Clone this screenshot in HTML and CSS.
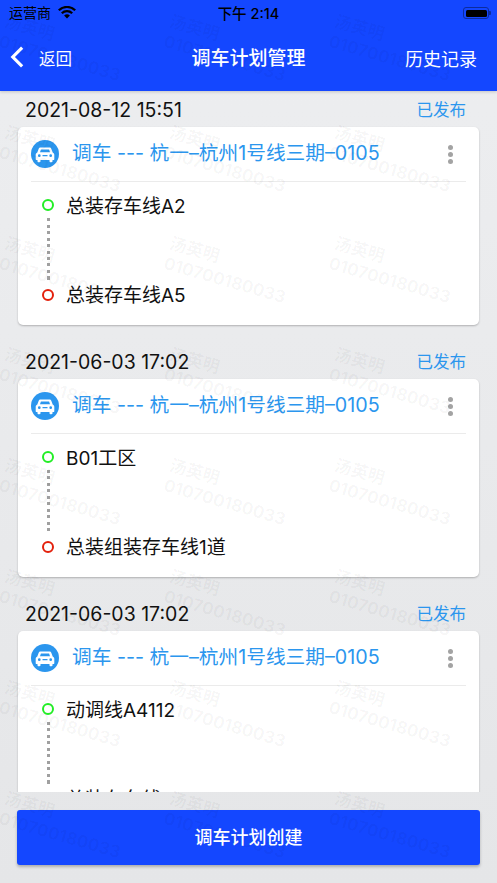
FILE: index.html
```html
<!DOCTYPE html>
<html lang="zh-CN">
<head>
<meta charset="utf-8">
<title>调车计划管理</title>
<link rel="stylesheet" href="styles.css">
</head>
<body>
<div class="app">
  <header class="header">
    <div class="status">
      <div class="status-left">
        <span class="carrier">运营商</span>
        <svg class="wifi" viewBox="0 0 18 13"><path d="M9 12.6 6.1 9.6a4.2 4.2 0 0 1 5.800 0Z"/><path d="M4.600 8.100 3 6.500a8.600 8.600 0 0 1 12 0l-1.600 1.600a6.300 6.300 0 0 0-8.800 0Z"/><path d="M1.600 5.100 0 3.500a12.900 12.900 0 0 1 18 0l-1.600 1.600a10.600 10.600 0 0 0-14.800 0Z"/></svg>
      </div>
      <div class="status-time">下午 2:14</div>
      <div class="battery"><span class="battery-fill"></span></div>
    </div>
    <nav class="nav">
      <div class="back">
        <svg class="chevron" viewBox="0 0 15 24"><path d="M13 2 3 12l10 10" fill="none" stroke="#fff" stroke-width="3.4"/></svg>
        <span>返回</span>
      </div>
      <h1 class="title">调车计划管理</h1>
      <div class="history">历史记录</div>
    </nav>
  </header>

  <main class="list">
    <section class="entry">
      <div class="entry-meta"><time>2021-08-12 15:51</time><span class="state">已发布</span></div>
      <article class="card">
        <div class="card-head">
          <svg class="car" viewBox="0 0 28 28"><circle cx="14" cy="14" r="14" fill="#2b96ee"/><path d="M9.600 7.500h8.800c.9 0 1.600.5 1.900 1.300l1.400 3.700c1 .4 1.600 1.300 1.600 2.400v4.300c0 .5-.4.9-.9.9h-.9v1.200c0 .5-.4.9-.9.9h-1.200c-.5 0-.9-.4-.9-.9v-1.200H9.500v1.200c0 .5-.4.9-.9.9H7.400c-.5 0-.9-.4-.9-.9v-1.200h-.9c-.5 0-.9-.4-.9-.9v-4.300c0-1.100.6-2 1.600-2.400l1.400-3.700c.3-.8 1-1.300 1.900-1.300Zm.3 2-.9 2.800h10l-.9-2.800ZM8.300 14.300a1.300 1.300 0 1 0 0 2.700 1.300 1.300 0 0 0 0-2.700Zm11.400 0a1.300 1.300 0 1 0 0 2.700 1.300 1.300 0 0 0 0-2.700ZM11.500 15v1.300h5V15Z" fill="#fff" fill-rule="evenodd"/></svg>
          <div class="card-title">调车 --- 杭一–杭州1号线三期–0105</div>
          <div class="more"><i></i><i></i><i></i></div>
        </div>
        <div class="route">
          <div class="stop"><span class="dot dot-start"></span><span class="stop-name">总装存车线A2</span></div>
          <div class="link"></div>
          <div class="stop"><span class="dot dot-end"></span><span class="stop-name">总装存车线A5</span></div>
        </div>
      </article>
    </section>

    <section class="entry">
      <div class="entry-meta"><time>2021-06-03 17:02</time><span class="state">已发布</span></div>
      <article class="card">
        <div class="card-head">
          <svg class="car" viewBox="0 0 28 28"><circle cx="14" cy="14" r="14" fill="#2b96ee"/><path d="M9.600 7.500h8.800c.9 0 1.600.5 1.900 1.300l1.400 3.700c1 .4 1.600 1.300 1.600 2.400v4.300c0 .5-.4.9-.9.9h-.9v1.200c0 .5-.4.9-.9.9h-1.200c-.5 0-.9-.4-.9-.9v-1.200H9.500v1.200c0 .5-.4.9-.9.9H7.400c-.5 0-.9-.4-.9-.9v-1.200h-.9c-.5 0-.9-.4-.9-.9v-4.300c0-1.100.6-2 1.600-2.400l1.400-3.700c.3-.8 1-1.300 1.900-1.300Zm.3 2-.9 2.800h10l-.9-2.800ZM8.300 14.300a1.300 1.300 0 1 0 0 2.700 1.300 1.300 0 0 0 0-2.700Zm11.400 0a1.300 1.300 0 1 0 0 2.700 1.300 1.300 0 0 0 0-2.700ZM11.500 15v1.300h5V15Z" fill="#fff" fill-rule="evenodd"/></svg>
          <div class="card-title">调车 --- 杭一–杭州1号线三期–0105</div>
          <div class="more"><i></i><i></i><i></i></div>
        </div>
        <div class="route">
          <div class="stop"><span class="dot dot-start"></span><span class="stop-name">B01工区</span></div>
          <div class="link"></div>
          <div class="stop"><span class="dot dot-end"></span><span class="stop-name">总装组装存车线1道</span></div>
        </div>
      </article>
    </section>

    <section class="entry">
      <div class="entry-meta"><time>2021-06-03 17:02</time><span class="state">已发布</span></div>
      <article class="card">
        <div class="card-head">
          <svg class="car" viewBox="0 0 28 28"><circle cx="14" cy="14" r="14" fill="#2b96ee"/><path d="M9.600 7.500h8.800c.9 0 1.600.5 1.900 1.300l1.400 3.700c1 .4 1.600 1.300 1.600 2.400v4.300c0 .5-.4.9-.9.9h-.9v1.200c0 .5-.4.9-.9.9h-1.200c-.5 0-.9-.4-.9-.9v-1.200H9.500v1.200c0 .5-.4.9-.9.9H7.400c-.5 0-.9-.4-.9-.9v-1.200h-.9c-.5 0-.9-.4-.9-.9v-4.300c0-1.100.6-2 1.600-2.400l1.400-3.700c.3-.8 1-1.300 1.900-1.300Zm.3 2-.9 2.800h10l-.9-2.800ZM8.300 14.300a1.300 1.300 0 1 0 0 2.700 1.300 1.300 0 0 0 0-2.700Zm11.400 0a1.300 1.300 0 1 0 0 2.700 1.300 1.300 0 0 0 0-2.700ZM11.500 15v1.300h5V15Z" fill="#fff" fill-rule="evenodd"/></svg>
          <div class="card-title">调车 --- 杭一–杭州1号线三期–0105</div>
          <div class="more"><i></i><i></i><i></i></div>
        </div>
        <div class="route">
          <div class="stop"><span class="dot dot-start"></span><span class="stop-name">动调线A4112</span></div>
          <div class="link"></div>
          <div class="stop"><span class="dot dot-end"></span><span class="stop-name">总装存车线A2</span></div>
        </div>
      </article>
    </section>
  </main>

  <footer class="footer">
    <button class="create" type="button">调车计划创建</button>
  </footer>

  <div class="watermarks" aria-hidden="true">
    <div class="mark">汤英明<br>010700180033</div><div class="mark">汤英明<br>010700180033</div><div class="mark">汤英明<br>010700180033</div>
    <div class="mark">汤英明<br>010700180033</div><div class="mark">汤英明<br>010700180033</div><div class="mark">汤英明<br>010700180033</div>
    <div class="mark">汤英明<br>010700180033</div><div class="mark">汤英明<br>010700180033</div><div class="mark">汤英明<br>010700180033</div>
    <div class="mark">汤英明<br>010700180033</div><div class="mark">汤英明<br>010700180033</div><div class="mark">汤英明<br>010700180033</div>
    <div class="mark">汤英明<br>010700180033</div><div class="mark">汤英明<br>010700180033</div><div class="mark">汤英明<br>010700180033</div>
    <div class="mark">汤英明<br>010700180033</div><div class="mark">汤英明<br>010700180033</div><div class="mark">汤英明<br>010700180033</div>
    <div class="mark">汤英明<br>010700180033</div><div class="mark">汤英明<br>010700180033</div><div class="mark">汤英明<br>010700180033</div>
    <div class="mark">汤英明<br>010700180033</div><div class="mark">汤英明<br>010700180033</div><div class="mark">汤英明<br>010700180033</div>
  </div>
</div>
</body>
</html>
```
FILE: styles.css
```css
* { box-sizing: border-box; }
html, body { margin: 0; padding: 0; height: 100%; }
body {
  font-family: Inter, "Noto Sans CJK SC", "Noto Sans", sans-serif;
  color: #111;
  background: #e8e9eb;
  overflow: hidden;
}
.app {
  position: relative;
  width: 497px;
  height: 883px;
  display: flex;
  flex-direction: column;
  overflow: hidden;
  background: linear-gradient(#edeef0, #e5e6e8);
}

/* Header */
.header {
  flex: none;
  height: 91px;
  background: #1447ff;
  box-shadow: 0 1px 3px rgba(0, 0, 0, .18);
  position: relative;
  z-index: 1;
}
.status {
  height: 26px;
  padding: 0 9px;
  display: grid;
  grid-template-columns: 1fr auto 1fr;
  align-items: center;
  color: #000;
  font-size: 14px;
}
.status-left { display: flex; align-items: center; gap: 7px; }
.carrier, .status-time { padding-bottom: 2px; }
.wifi { width: 18px; height: 13px; margin-top: -2px; }
.status-time { font-weight: 500; font-size: 14.500px; }
.battery {
  position: relative;
  justify-self: end;
  width: 26px;
  height: 12px;
  margin-right: -1px;
  border: 1px solid #0c2c9e;
  border-radius: 3px;
  padding: 1.500px;
}
.battery::after {
  content: "";
  position: absolute;
  right: -3px;
  top: 3px;
  width: 2px;
  height: 4px;
  background: #0c2c9e;
  border-radius: 0 1px 1px 0;
}
.battery-fill { display: block; height: 100%; background: #000; border-radius: 1.500px; }
.nav {
  height: 65px;
  padding: 0 20px;
  display: grid;
  grid-template-columns: 1fr auto 1fr;
  align-items: center;
  color: #fff;
}
.back { display: flex; align-items: center; gap: 15px; margin-left: -10px; font-size: 16.500px; }
.back span { padding-bottom: 2px; }
.chevron { width: 14px; height: 24px; margin-top: -3px; }
.title { margin: 0; padding-bottom: 4px; font-size: 19px; font-weight: 500; }
.history { justify-self: end; padding-bottom: 2px; font-size: 18px; }

/* List */
.list {
  flex: 1;
  min-height: 0;
  overflow: hidden;
  padding-top: 2px;
}
.entry { margin: 0 18px 20px; }
.entry-meta {
  height: 34px;
  padding: 0 13px 0 7px;
  display: flex;
  justify-content: space-between;
  align-items: center;
  font-size: 19.500px;
}
.state { padding-bottom: 2px; color: #2b96ee; font-size: 16.500px; }
.card {
  height: 198px;
  background: #fff;
  border-radius: 5px;
  box-shadow: 0 1px 2px rgba(0, 0, 0, .25);
  padding: 0 13px;
}
.card-head {
  height: 55px;
  border-bottom: 1px solid #ebebeb;
  display: flex;
  align-items: center;
}
.car { flex: none; width: 28px; height: 28px; }
.card-title {
  flex: 1;
  margin-left: 13px;
  padding-bottom: 5px;
  color: #2b96ee;
  font-size: 19.700px;
  white-space: nowrap;
}
.more { display: flex; flex-direction: column; gap: 2px; margin-right: 13px; }
.more i { width: 5px; height: 5px; border-radius: 50%; background: #a3a3a3; }
.route { padding: 12px 0 0 11px; }
.stop {
  height: 24px;
  display: flex;
  align-items: center;
  gap: 12px;
  font-size: 19px;
}
.stop-name { padding-bottom: 3px; }
.dot {
  flex: none;
  width: 12px;
  height: 12px;
  border-radius: 50%;
  border: 2.300px solid;
  background: #fff;
}
.dot-start { border-color: #22ee25; margin-top: -2px; }
.dot-end { border-color: #e3200c; }
.link {
  width: 3px;
  height: 65px;
  margin-left: 4.500px;
  background: repeating-linear-gradient(#a0a0a0 0 3px, transparent 3px 6.500px);
}

/* Footer */
.footer { flex: none; padding: 18px 17px; }
.create {
  display: block;
  width: 100%;
  height: 55px;
  border: 0;
  border-radius: 3px;
  padding: 0 0 3px;
  background: #1447ff;
  color: #fff;
  font: 500 18px Inter, "Noto Sans CJK SC", sans-serif;
  box-shadow: 0 2px 3px rgba(0, 0, 0, .25);
}

/* Watermark overlay */
.watermarks {
  position: absolute;
  inset: 0;
  pointer-events: none;
  padding: 11px 0 0 8px;
  display: grid;
  grid-template-columns: repeat(3, 165px);
  grid-auto-rows: 111px;
  z-index: 2;
}
.mark {
  color: rgba(0, 0, 0, .04);
  font-size: 17px;
  font-weight: 700;
  line-height: 21px;
  white-space: nowrap;
  transform: rotate(16deg);
  transform-origin: 0 0;
}
```
